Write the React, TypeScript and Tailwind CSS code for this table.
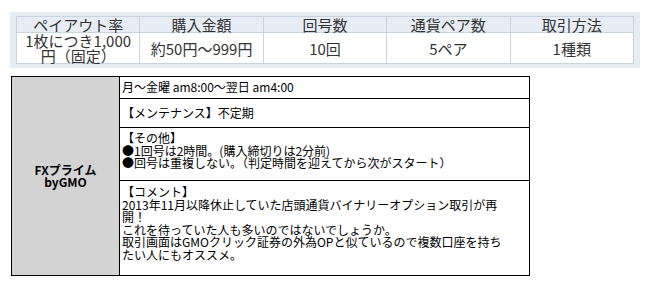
const summary = [
  { label: 'ペイアウト率', value: <>1枚につき1,000<br />円（固定）</> },
  { label: '購入金額', value: '約50円〜999円' },
  { label: '回号数', value: '10回' },
  { label: '通貨ペア数', value: '5ペア' },
  { label: '取引方法', value: '1種類' },
]

const comment = [
  '【コメント】',
  '2013年11月以降休止していた店頭通貨バイナリーオプション取引が再',
  '開！',
  'これを待っていた人も多いのではないでしょうか。',
  '取引画面はGMOクリック証券の外為OPと似ているので複数口座を持ち',
  'たい人にもオススメ。',
]

const others = [
  '【その他】',
  '●1回号は2時間。(購入締切りは2分前)',
  '●回号は重複しない。（判定時間を迎えてから次がスタート）',
]

function SummaryTable() {
  return (
    <div className="ml-[10px] w-[630px] bg-[#e5ecf4] px-[6px] py-[4px]">
      <table className="w-full table-fixed border-collapse border border-[#c9d4e0] font-['Noto_Sans_CJK_JP',sans-serif] text-[15px] text-[#333]">
        <thead>
          <tr>
            {summary.map((s) => (
              <th
                key={s.label}
                className="h-[16px] border border-[#c9d4e0] bg-[#e6edf5] p-0 text-center font-normal leading-[15px]"
              >
                {s.label}
              </th>
            ))}
          </tr>
        </thead>
        <tbody>
          <tr>
            {summary.map((s) => (
              <td
                key={s.label}
                className="h-[30px] border border-[#c9d4e0] bg-white p-0 text-center align-middle leading-[15px]"
              >
                {s.value}
              </td>
            ))}
          </tr>
        </tbody>
      </table>
    </div>
  )
}

function Lines({ lines }: { lines: string[] }) {
  return (
    <>
      {lines.map((l) => (
        <div key={l} className="whitespace-nowrap">
          {l}
        </div>
      ))}
    </>
  )
}

function DetailTable() {
  return (
    <table className="ml-[11px] mt-[8px] w-[519px] table-fixed border-collapse border border-black font-['Noto_Sans_CJK_JP',sans-serif] text-[12px] leading-[12.5px] text-black">
      <colgroup>
        <col className="w-[108px]" />
        <col />
      </colgroup>
      <tbody>
        <tr>
          <td rowSpan={4} className="border border-black bg-[#d3d3d3] p-0 text-center align-middle font-bold">
            FXプライム
            <br />
            byGMO
          </td>
          <td className="h-[22px] border border-black px-[2px] py-0 align-middle">月〜金曜 am8:00〜翌日 am4:00</td>
        </tr>
        <tr>
          <td className="h-[29px] border border-black px-[2px] py-0 align-middle">【メンテナンス】不定期</td>
        </tr>
        <tr>
          <td className="h-[53px] border border-black px-[2px] pt-[4px] align-top">
            <Lines lines={others} />
          </td>
        </tr>
        <tr>
          <td className="h-[95px] border border-black px-[2px] pt-[5px] align-top">
            <Lines lines={comment} />
          </td>
        </tr>
      </tbody>
    </table>
  )
}

export default function App() {
  return (
    <div className="h-[284px] w-[645px] overflow-hidden bg-white pt-[12px]">
      <SummaryTable />
      <DetailTable />
    </div>
  )
}
